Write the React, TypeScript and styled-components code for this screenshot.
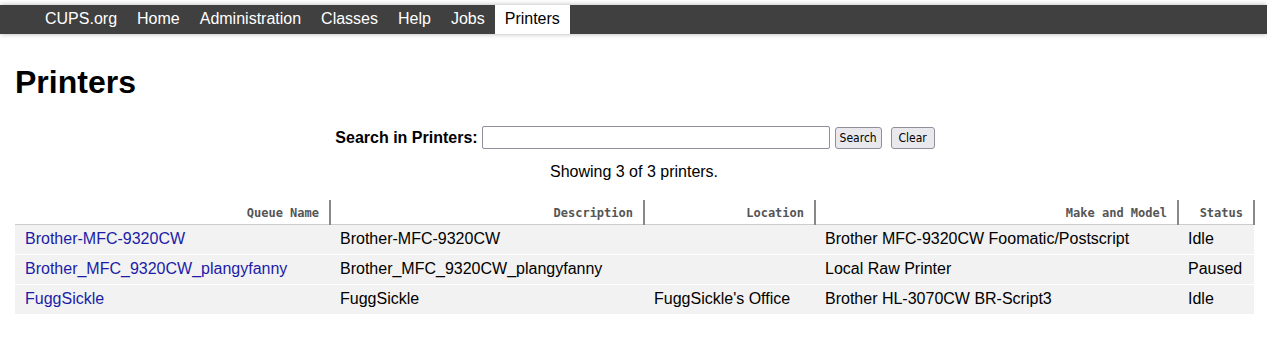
import React from "react";
import styled, { createGlobalStyle } from "styled-components";

const Global = createGlobalStyle`
  html, body { margin: 0; padding: 0; background: #fff; }
  body { font-family: "Liberation Sans", Arial, sans-serif; color: #000; font-size: 16px; }
`;

const Header = styled.div`
  margin-top: 5px;
  height: 29px;
  background: #404040;
  box-shadow: 0 0 5px rgba(0, 0, 0, 0.3);
  padding-left: 35px;
  display: flex;
`;

const NavLink = styled.a<{ $active?: boolean }>`
  display: block;
  padding: 0 10px 2px;
  font-size: 16px;
  line-height: 27px;
  text-decoration: none;
  color: ${(p) => (p.$active ? "#000" : "#fff")};
  background: ${(p) => (p.$active ? "#fff" : "transparent")};
`;

const Body = styled.div`
  padding: 0 14px 0 15px;
`;

const Title = styled.h1`
  margin: 30px 0 0;
  font-size: 32px;
  font-weight: bold;
  line-height: 37px;
`;

const SearchForm = styled.form`
  margin-top: 25px;
  display: flex;
  justify-content: center;
  align-items: center;
  padding-left: 2px;
`;

const Label = styled.label`
  font-weight: bold;
  font-size: 16px;
  margin-right: 4px;
`;

const Input = styled.input`
  width: 348px;
  height: 23px;
  box-sizing: border-box;
  border: 1px solid #8f8f9d;
  border-radius: 2px;
  margin: 0 5px 0 0;
`;

const Button = styled.button<{ $w: number }>`
  width: ${(p) => p.$w}px;
  height: 22px;
  margin: 1px 9px 0 0;
  padding: 0;
  font-family: "DejaVu Sans Condensed", "DejaVu Sans", sans-serif;
  font-size: 12px;
  background: #e9e9ed;
  border: 1px solid #8f8f9d;
  border-radius: 3px;
  color: #000;
  &:last-child { margin-right: 0; }
`;

const Summary = styled.p`
  margin: 13px 0 0;
  text-align: center;
  font-size: 16px;
  line-height: 19px;
`;

const Table = styled.table`
  margin-top: 19px;
  width: 100%;
  border-collapse: collapse;
  table-layout: fixed;
`;

const Th = styled.th<{ $w: number }>`
  width: ${(p) => p.$w}px;
  font-family: "DejaVu Sans Mono", monospace;
  font-size: 12px;
  font-weight: bold;
  color: #555;
  text-align: right;
  padding: 5px 10px 3px 10px;
  height: 16px;
  line-height: 16px;
  border-right: 2px solid #888;
  border-bottom: 1px solid #ccc;
  box-sizing: content-box;
`;

const Row = styled.tr`
  background: #f2f2f2;
`;

const Td = styled.td`
  padding: 4px 10px 6px 10px;
  line-height: 19px;
  font-size: 16px;
  border-bottom: 1px solid #fff;
  white-space: nowrap;
`;

const QueueLink = styled.a`
  color: #1c1ca8;
  text-decoration: none;
`;

const printers = [
  { name: "Brother-MFC-9320CW", desc: "Brother-MFC-9320CW", loc: "", model: "Brother MFC-9320CW Foomatic/Postscript", status: "Idle" },
  { name: "Brother_MFC_9320CW_plangyfanny", desc: "Brother_MFC_9320CW_plangyfanny", loc: "", model: "Local Raw Printer", status: "Paused" },
  { name: "FuggSickle", desc: "FuggSickle", loc: "FuggSickle's Office", model: "Brother HL-3070CW BR-Script3", status: "Idle" },
];

export default function App() {
  const nav = ["CUPS.org", "Home", "Administration", "Classes", "Help", "Jobs", "Printers"];
  return (
    <>
      <Global />
      <Header>
        {nav.map((n) => (
          <NavLink key={n} href="#" $active={n === "Printers"}>{n}</NavLink>
        ))}
      </Header>
      <Body>
        <Title>Printers</Title>
        <SearchForm onSubmit={(e) => e.preventDefault()}>
          <Label>Search in Printers:</Label>
          <Input type="search" />
          <Button type="submit" $w={47}>Search</Button>
          <Button type="button" $w={44}>Clear</Button>
        </SearchForm>
        <Summary>Showing 3 of 3 printers.</Summary>
        <Table>
          <thead>
            <tr>
              <Th $w={294}>Queue Name</Th>
              <Th $w={292}>Description</Th>
              <Th $w={149}>Location</Th>
              <Th $w={341}>Make and Model</Th>
              <Th $w={54}>Status</Th>
            </tr>
          </thead>
          <tbody>
            {printers.map((p) => (
              <Row key={p.name}>
                <Td><QueueLink href="#">{p.name}</QueueLink></Td>
                <Td>{p.desc}</Td>
                <Td>{p.loc}</Td>
                <Td>{p.model}</Td>
                <Td>{p.status}</Td>
              </Row>
            ))}
          </tbody>
        </Table>
      </Body>
    </>
  );
}
